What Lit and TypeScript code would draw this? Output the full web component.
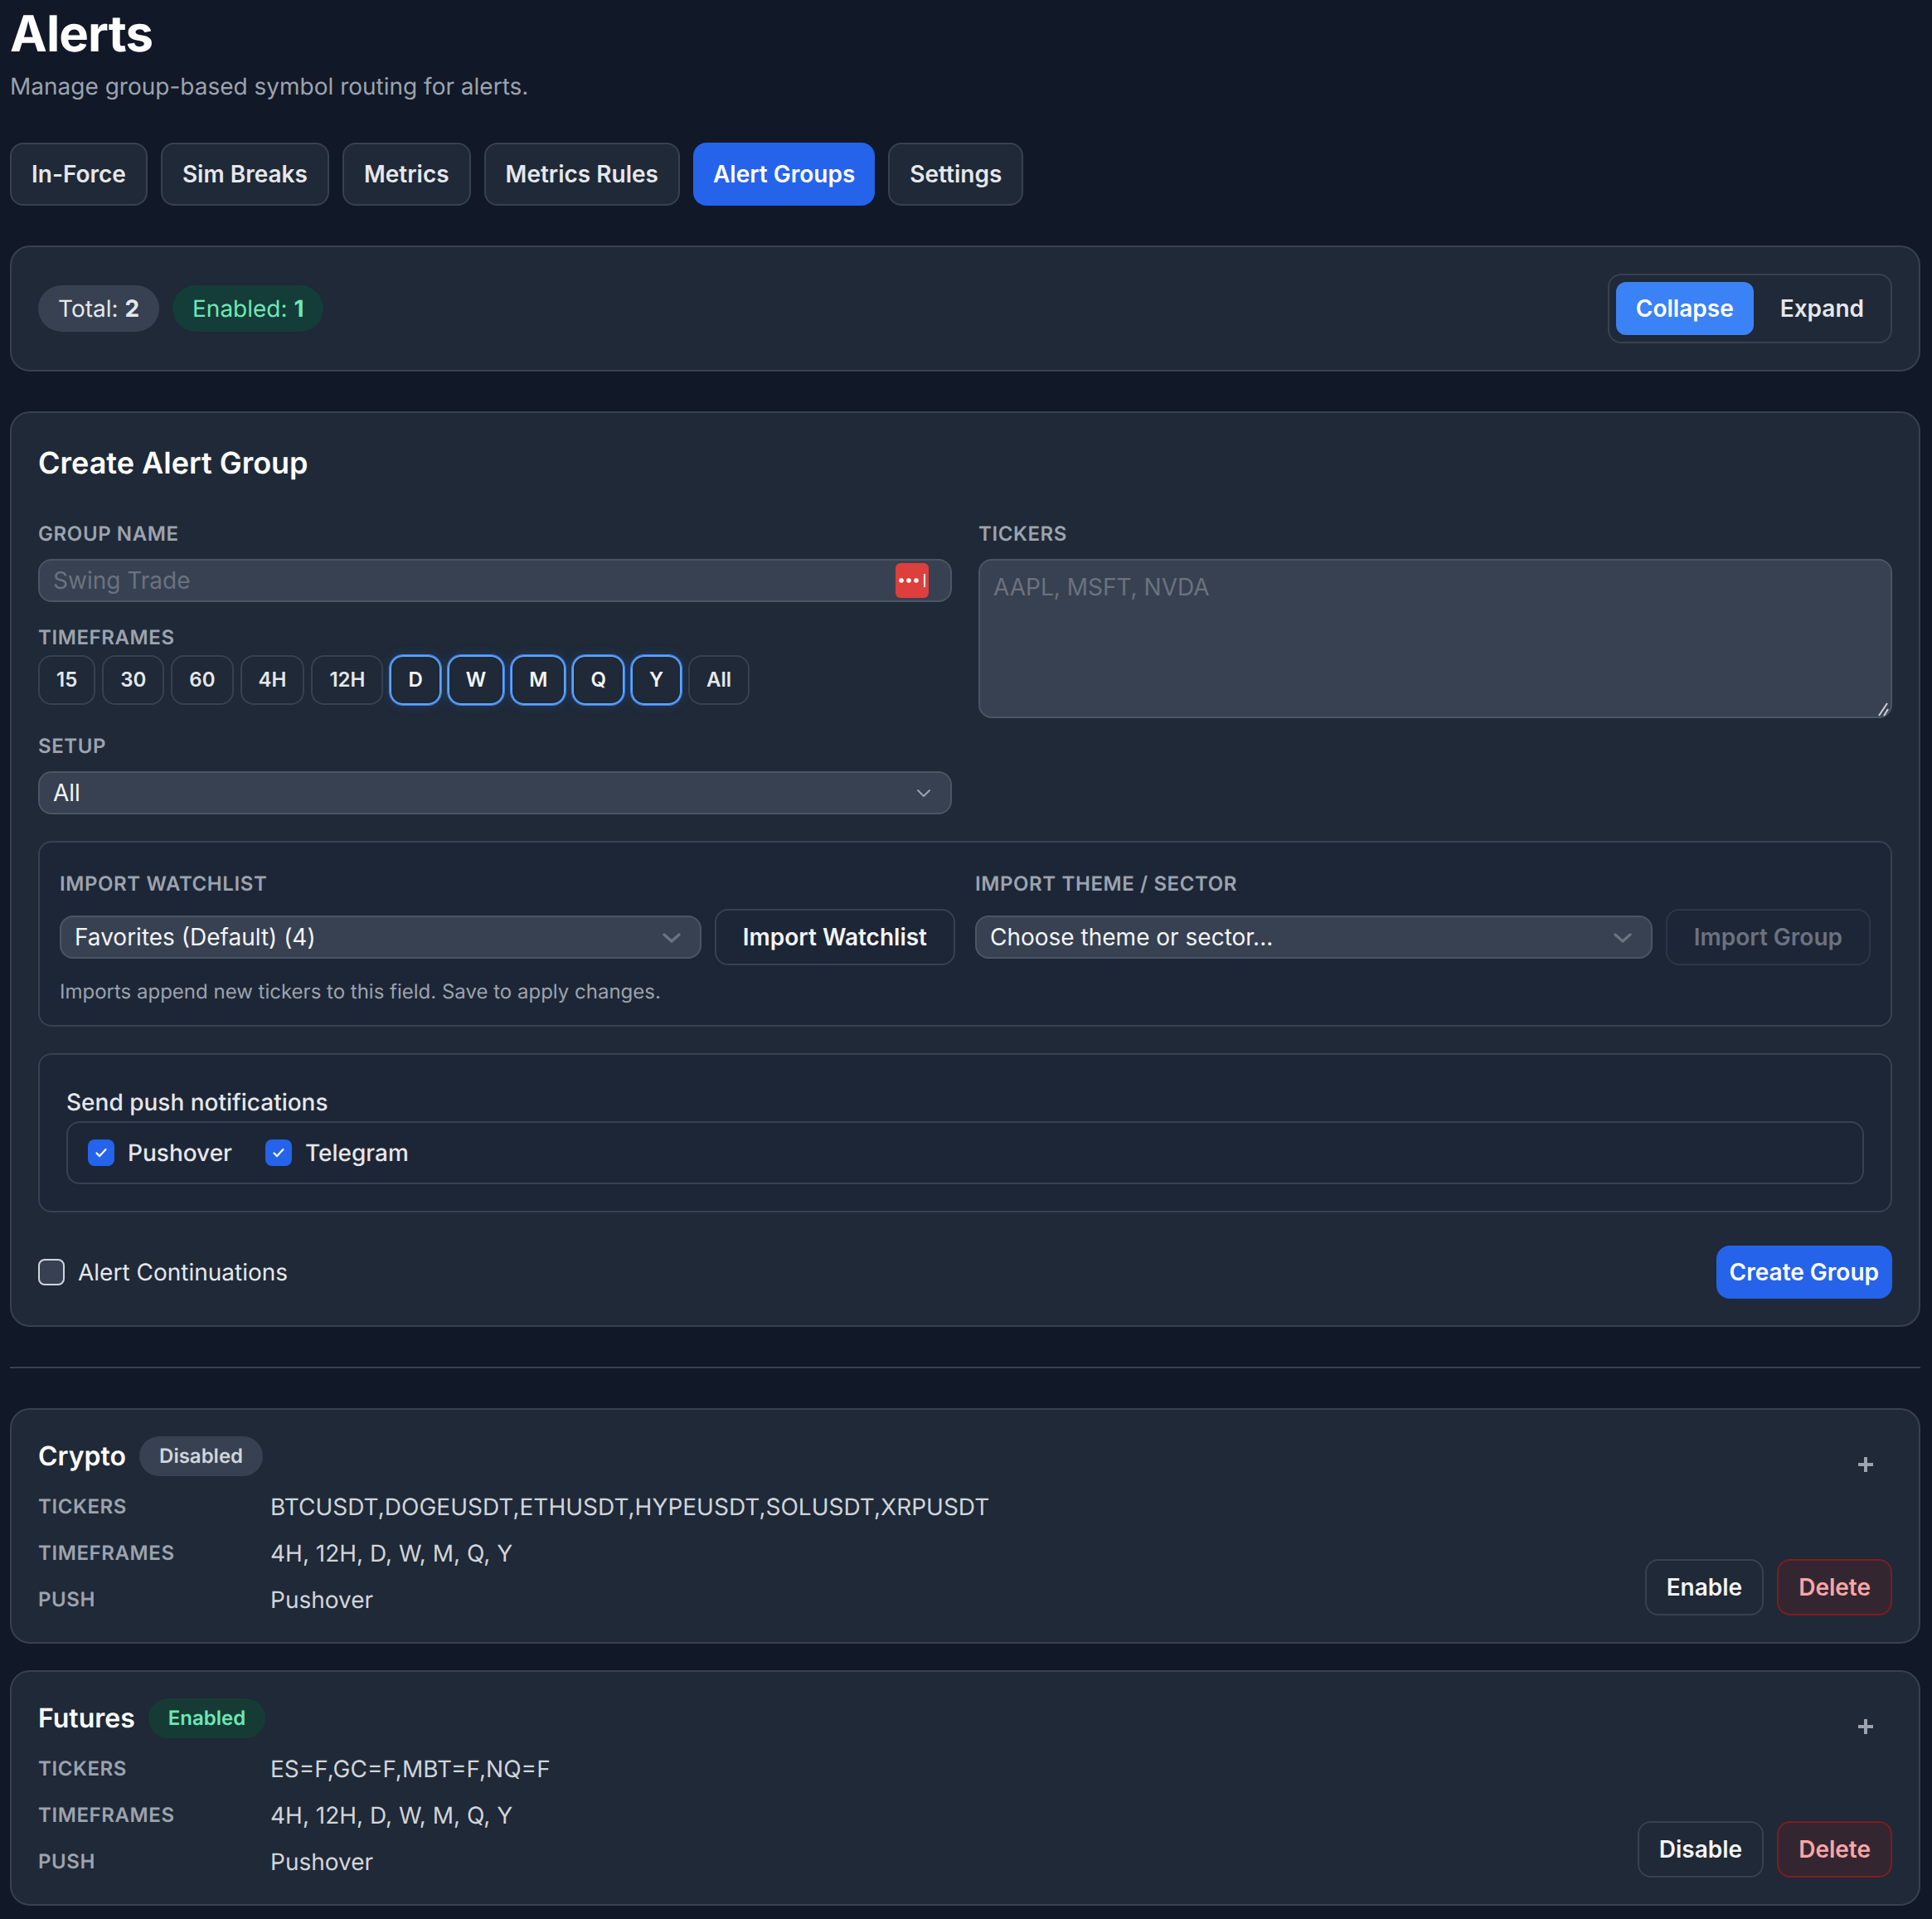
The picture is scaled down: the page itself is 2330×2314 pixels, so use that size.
import { LitElement, html, css } from 'lit';
import { customElement } from 'lit/decorators.js';
import { classMap } from 'lit/directives/class-map.js';

const TABS = ['In-Force', 'Sim Breaks', 'Metrics', 'Metrics Rules', 'Alert Groups', 'Settings'];
const CHIPS = ['15', '30', '60', '4H', '12H', 'D', 'W', 'M', 'Q', 'Y', 'All'];
const SELECTED = ['D', 'W', 'M', 'Q', 'Y'];

const GROUPS = [
  {
    name: 'Crypto',
    enabled: false,
    tickers: 'BTCUSDT,DOGEUSDT,ETHUSDT,HYPEUSDT,SOLUSDT,XRPUSDT',
    timeframes: '4H, 12H, D, W, M, Q, Y',
    push: 'Pushover',
  },
  {
    name: 'Futures',
    enabled: true,
    tickers: 'ES=F,GC=F,MBT=F,NQ=F',
    timeframes: '4H, 12H, D, W, M, Q, Y',
    push: 'Pushover',
  },
];

const check = html`<svg width="18" height="18" viewBox="0 0 18 18" fill="none" stroke="#fff" stroke-width="2.2" stroke-linecap="round" stroke-linejoin="round"><path d="M3.5 9.5l3.6 3.6 7.4-8"/></svg>`;

@customElement('app-root')
export class AppRoot extends LitElement {
  static styles = css`
    :host {
      display: block;
      min-height: 2314px;
      box-sizing: border-box;
      padding: 5px 14px 17px 12px;
      background: #111827;
      color: #e5e7eb;
      font-family: Inter, 'Liberation Sans', sans-serif;
      font-size: 28px;
      line-height: 40px;
      text-rendering: geometricPrecision;
    }
    * { box-sizing: border-box; }
    button, input, select, textarea { font: inherit; color: inherit; margin: 0; }

    .page { display: flex; flex-direction: column; gap: 48px; }
    h1 { margin: 0 0 7px; font-size: 60px; line-height: 72px; font-weight: 700; color: #fff; letter-spacing: -0.9px; }
    .sub { margin: 0; color: #9ca3af; }

    .tabs { display: flex; gap: 16px; }
    .tab {
      height: 76px;
      padding: 0 24px;
      border: 2px solid #374151;
      border-radius: 16px;
      background: #1f2937;
      color: #e5e7eb;
      font-weight: 600;
    }
    .tab.active { background: #2563eb; border: 0; color: #fff; }

    .card { border: 2px solid #374151; border-radius: 24px; background: #1f2937; padding: 32px; }

    .summary { display: flex; align-items: center; justify-content: space-between; }
    .pills { display: flex; gap: 16px; }
    .pill { height: 56px; padding: 0 24px; border-radius: 28px; display: flex; align-items: center; gap: 0.28em; }
    .pill b { font-weight: 700; }
    .pill.total { background: #374151; color: #e5e7eb; }
    .pill.on { background: #143c38; color: #6ee7b7; }
    .toggle { display: flex; gap: 8px; padding: 8px; border: 2px solid #374151; border-radius: 16px; }
    .toggle button {
      height: 64px;
      padding: 0 24px;
      border: 0;
      border-radius: 12px;
      background: transparent;
      font-weight: 600;
    }
    .toggle button.active { background: #3b82f6; color: #fff; }

    h2 { margin: 0 0 42px; font-size: 36px; line-height: 56px; font-weight: 600; color: #fff; }
    .label {
      display: block;
      font-size: 24px;
      line-height: 32px;
      font-weight: 600;
      letter-spacing: 0.6px;
      color: #9ca3af;
      text-transform: uppercase;
    }
    .form { display: grid; grid-template-columns: 1fr 1fr; column-gap: 32px; align-items: start; }
    .col { display: flex; flex-direction: column; }
    .gap-input { margin-top: 14px; }
    .tf-label { margin-top: 27px; }
    .setup-label { margin-top: 34px; }
    .field {
      width: 100%;
      height: 52px;
      padding: 0 16px;
      border: 2px solid #4b5563;
      border-radius: 16px;
      background: #374151;
      color: #f3f4f6;
      outline: none;
      line-height: 48px;
      appearance: none;
    }
    .field::placeholder, textarea::placeholder { color: #6b7280; opacity: 1; }
    textarea.field { display: block; height: 192px; padding: 8px 16px; resize: none; }

    .wrap { position: relative; flex: 1; min-width: 0; }
    .pass {
      position: absolute;
      right: 28px;
      top: 5px;
      width: 40px;
      height: 42px;
      border-radius: 6px;
      background: #dc3f3c;
    }
    .grip { position: absolute; right: 3px; bottom: 2px; }
    .chev { position: absolute; pointer-events: none; }
    .chev.thin { right: 25px; top: 21px; }
    .chev.bold { right: 24px; top: 20px; }

    .chips { display: flex; gap: 8px; margin-top: 5px; }
    .chip {
      height: 60px;
      padding: 0 20px;
      border: 2px solid #374151;
      border-radius: 16px;
      background: transparent;
      color: #e5e7eb;
      font-size: 24px;
      line-height: 32px;
      font-weight: 600;
    }
    .chip.sel {
      border-color: #60a5fa;
      color: #f3f4f6;
      box-shadow: 0 0 0 1px #3b82f6, 0 0 14px rgba(59, 130, 246, 0.22);
    }

    .box { border: 2px solid #374151; border-radius: 16px; background: #1d2636; margin-top: 32px; }
    .imports {
      padding: 34px 24px 24px;
      display: grid;
      grid-template-columns: 1fr 1fr;
      column-gap: 24px;
    }
    .ctl { display: flex; align-items: center; gap: 16px; margin-top: 14px; }
    .btn {
      height: 68px;
      padding: 0 32px;
      border: 2px solid #374151;
      border-radius: 16px;
      background: transparent;
      color: #f3f4f6;
      font-weight: 600;
      white-space: nowrap;
    }
    .btn:disabled { color: #6b7280; border-color: #2c3647; }
    .hint { grid-column: 1 / -1; margin-top: 16px; font-size: 24px; line-height: 32px; color: #9ca3af; }

    .push { padding: 34px 32px 32px; }
    .push-title { font-weight: 500; margin: 3px 0 3px; color: #e5e7eb; }
    .channels {
      display: flex;
      gap: 40px;
      height: 76px;
      align-items: center;
      padding: 0 24px;
      border: 2px solid #374151;
      border-radius: 16px;
    }
    .opt { display: flex; align-items: center; gap: 16px; font-weight: 500; }
    .opt.plain { font-weight: 400; }
    .cb {
      width: 32px;
      height: 32px;
      border-radius: 8px;
      display: flex;
      align-items: center;
      justify-content: center;
      background: #2563eb;
    }
    .cb.off { background: #374151; border: 2px solid #d1d5db; }

    .foot { display: flex; align-items: center; justify-content: space-between; margin-top: 40px; }
    .primary {
      height: 64px;
      padding: 0 16px;
      border: 0;
      border-radius: 16px;
      background: #2563eb;
      color: #fff;
      font-weight: 600;
    }

    hr { width: 100%; height: 2px; margin: 0; border: 0; background: #374151; }

    .groups { display: flex; flex-direction: column; gap: 32px; }
    .group { display: flex; justify-content: space-between; height: 284px; }
    .head { display: flex; align-items: center; gap: 16px; height: 48px; margin-bottom: 17px; }
    .name { font-size: 32px; font-weight: 600; color: #fff; }
    .badge {
      height: 48px;
      padding: 0 24px;
      border-radius: 24px;
      display: flex;
      align-items: center;
      font-size: 24px;
      font-weight: 600;
    }
    .badge.off { background: #374151; color: #d1d5db; }
    .badge.ok { background: #163b35; color: #6ee7b7; }
    .rows { display: grid; grid-template-columns: 280px auto; row-gap: 16px; align-items: center; color: #d1d5db; }
    .side { display: flex; flex-direction: column; align-items: flex-end; justify-content: space-between; }
    .plus {
      width: 64px;
      height: 68px;
      border: 0;
      background: transparent;
      display: flex;
      align-items: center;
      justify-content: center;
    }
    .actions { display: flex; gap: 16px; }
    .actions .btn { padding: 0 24px; }
    .actions .del { background: #342631; border-color: #7f1d1d; color: #fca5a5; }
  `;

  private chevron(kind: 'thin' | 'bold') {
    return kind === 'thin'
      ? html`<svg class="chev thin" width="18" height="11" viewBox="0 0 18 11" fill="none" stroke="#9ca3af" stroke-width="2" stroke-linecap="round" stroke-linejoin="round"><path d="M2 2l7 7 7-7"/></svg>`
      : html`<svg class="chev bold" width="24" height="14" viewBox="0 0 24 14" fill="none" stroke="#6b7280" stroke-width="3.4" stroke-linecap="round" stroke-linejoin="round"><path d="M3 3l9 8 9-8"/></svg>`;
  }

  private renderGroup(g: (typeof GROUPS)[number]) {
    return html`
      <section class="card group">
        <div>
          <div class="head">
            <span class="name">${g.name}</span>
            <span class="badge ${g.enabled ? 'ok' : 'off'}">${g.enabled ? 'Enabled' : 'Disabled'}</span>
          </div>
          <div class="rows">
            <span class="label">Tickers</span><span>${g.tickers}</span>
            <span class="label">Timeframes</span><span>${g.timeframes}</span>
            <span class="label">Push</span><span>${g.push}</span>
          </div>
        </div>
        <div class="side">
          <button class="plus" aria-label="Expand">
            <svg width="20" height="20" viewBox="0 0 20 20" stroke="#9ca3af" stroke-width="4"><path d="M1 10h18M10 1v18"/></svg>
          </button>
          <div class="actions">
            <button class="btn">${g.enabled ? 'Disable' : 'Enable'}</button>
            <button class="btn del">Delete</button>
          </div>
        </div>
      </section>
    `;
  }

  render() {
    return html`
      <div class="page">
        <header>
          <h1>Alerts</h1>
          <p class="sub">Manage group-based symbol routing for alerts.</p>
        </header>

        <nav class="tabs">
          ${TABS.map((t) => html`<button class=${classMap({ tab: true, active: t === 'Alert Groups' })}>${t}</button>`)}
        </nav>

        <section class="card summary">
          <div class="pills">
            <span class="pill total">Total: <b>2</b></span>
            <span class="pill on">Enabled: <b>1</b></span>
          </div>
          <div class="toggle">
            <button class="active">Collapse</button>
            <button>Expand</button>
          </div>
        </section>

        <section class="card">
          <h2>Create Alert Group</h2>
          <div class="form">
            <div class="col">
              <span class="label">Group Name</span>
              <div class="wrap gap-input">
                <input class="field" placeholder="Swing Trade" />
                <span class="pass">
                  <svg width="40" height="42" viewBox="0 0 40 42" fill="#fff">
                    <circle cx="7" cy="21" r="2.8"/><circle cx="16" cy="21" r="2.8"/><circle cx="25" cy="21" r="2.8"/>
                    <rect x="34" y="13" width="2" height="16"/>
                  </svg>
                </span>
              </div>
              <span class="label tf-label">Timeframes</span>
              <div class="chips">
                ${CHIPS.map((c) => html`<button class=${classMap({ chip: true, sel: SELECTED.includes(c) })}>${c}</button>`)}
              </div>
              <span class="label setup-label">Setup</span>
              <div class="wrap gap-input">
                <select class="field"><option>All</option></select>
                ${this.chevron('thin')}
              </div>
            </div>
            <div class="col">
              <span class="label">Tickers</span>
              <div class="wrap gap-input">
                <textarea class="field" placeholder="AAPL, MSFT, NVDA"></textarea>
                <svg class="grip" width="14" height="17" viewBox="0 0 14 17" fill="none" stroke-width="2">
                  <path d="M1 16L11 1" stroke="#d1d5db"/><path d="M7 16l5-8" stroke="#d1d5db"/>
                </svg>
              </div>
            </div>
          </div>

          <div class="box imports">
            <div>
              <span class="label">Import Watchlist</span>
              <div class="ctl">
                <div class="wrap">
                  <select class="field"><option>Favorites (Default) (4)</option></select>
                  ${this.chevron('bold')}
                </div>
                <button class="btn">Import Watchlist</button>
              </div>
            </div>
            <div>
              <span class="label">Import Theme / Sector</span>
              <div class="ctl">
                <div class="wrap">
                  <select class="field"><option>Choose theme or sector...</option></select>
                  ${this.chevron('bold')}
                </div>
                <button class="btn" disabled>Import Group</button>
              </div>
            </div>
            <div class="hint">Imports append new tickers to this field. Save to apply changes.</div>
          </div>

          <div class="box push">
            <div class="push-title">Send push notifications</div>
            <div class="channels">
              <label class="opt"><span class="cb">${check}</span>Pushover</label>
              <label class="opt"><span class="cb">${check}</span>Telegram</label>
            </div>
          </div>

          <div class="foot">
            <label class="opt plain"><span class="cb off"></span>Alert Continuations</label>
            <button class="primary">Create Group</button>
          </div>
        </section>

        <hr />

        <div class="groups">${GROUPS.map((g) => this.renderGroup(g))}</div>
      </div>
    `;
  }
}
